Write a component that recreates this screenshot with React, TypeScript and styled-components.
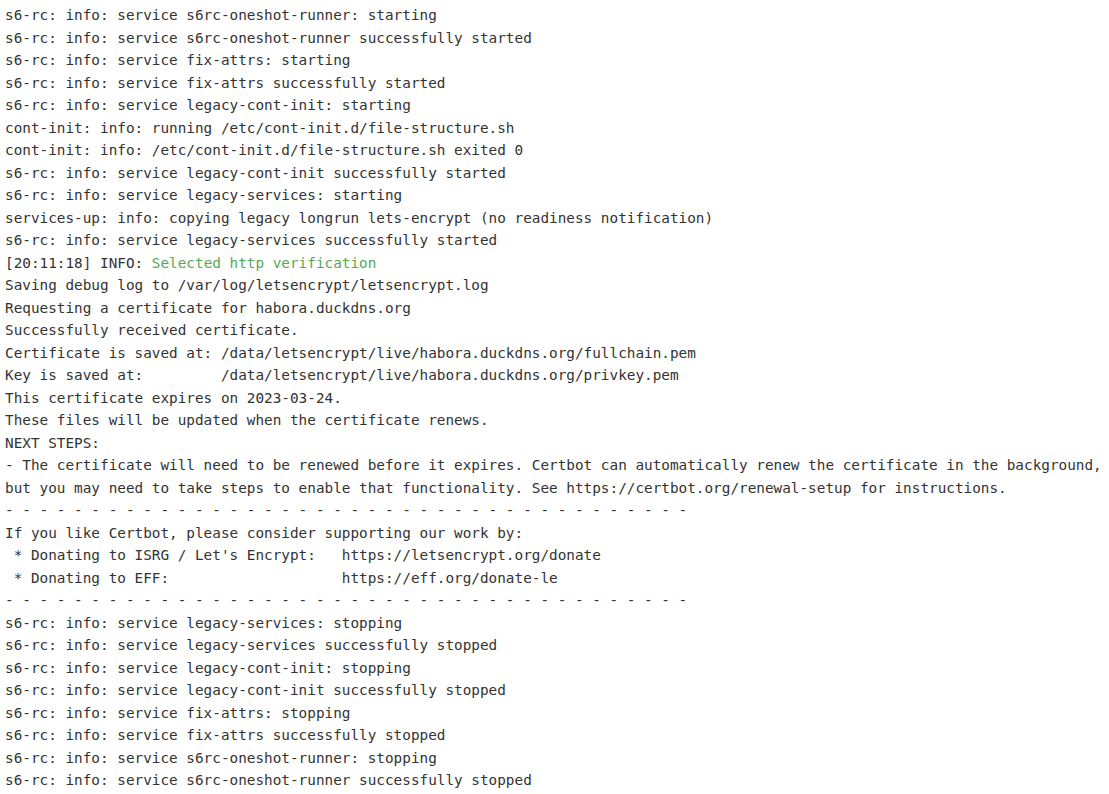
import React from "react";
import styled, { createGlobalStyle } from "styled-components";

const Global = createGlobalStyle`
  html, body { margin: 0; padding: 0; background: #ffffff; }
`;

const Log = styled.div`
  display: flex;
  flex-direction: column;
  padding: 4px 5px;
  font-family: "DejaVu Sans Mono", "Liberation Mono", monospace;
  font-size: 14.35px;
  line-height: 22.5px;
  color: #333333;
  background: #ffffff;
`;

const Line = styled.div`
  white-space: pre;
`;

const Tone = styled.span<{ $tone?: "green" }>`
  color: ${(p) => (p.$tone === "green" ? "#55a955" : "inherit")};
`;

const dashes = Array(40).fill("-").join(" ");

const lines: (string | React.ReactNode)[] = [
  "s6-rc: info: service s6rc-oneshot-runner: starting",
  "s6-rc: info: service s6rc-oneshot-runner successfully started",
  "s6-rc: info: service fix-attrs: starting",
  "s6-rc: info: service fix-attrs successfully started",
  "s6-rc: info: service legacy-cont-init: starting",
  "cont-init: info: running /etc/cont-init.d/file-structure.sh",
  "cont-init: info: /etc/cont-init.d/file-structure.sh exited 0",
  "s6-rc: info: service legacy-cont-init successfully started",
  "s6-rc: info: service legacy-services: starting",
  "services-up: info: copying legacy longrun lets-encrypt (no readiness notification)",
  "s6-rc: info: service legacy-services successfully started",
  <>
    [20:11:18] INFO: <Tone $tone="green">Selected http verification</Tone>
  </>,
  "Saving debug log to /var/log/letsencrypt/letsencrypt.log",
  "Requesting a certificate for habora.duckdns.org",
  "Successfully received certificate.",
  "Certificate is saved at: /data/letsencrypt/live/habora.duckdns.org/fullchain.pem",
  "Key is saved at:         /data/letsencrypt/live/habora.duckdns.org/privkey.pem",
  "This certificate expires on 2023-03-24.",
  "These files will be updated when the certificate renews.",
  "NEXT STEPS:",
  "- The certificate will need to be renewed before it expires. Certbot can automatically renew the certificate in the background,",
  "but you may need to take steps to enable that functionality. See https://certbot.org/renewal-setup for instructions.",
  dashes,
  "If you like Certbot, please consider supporting our work by:",
  " * Donating to ISRG / Let's Encrypt:   https://letsencrypt.org/donate",
  " * Donating to EFF:                    https://eff.org/donate-le",
  dashes,
  "s6-rc: info: service legacy-services: stopping",
  "s6-rc: info: service legacy-services successfully stopped",
  "s6-rc: info: service legacy-cont-init: stopping",
  "s6-rc: info: service legacy-cont-init successfully stopped",
  "s6-rc: info: service fix-attrs: stopping",
  "s6-rc: info: service fix-attrs successfully stopped",
  "s6-rc: info: service s6rc-oneshot-runner: stopping",
  "s6-rc: info: service s6rc-oneshot-runner successfully stopped",
];

export default function App() {
  return (
    <>
      <Global />
      <Log>
        {lines.map((l, i) => (
          <Line key={i}>{l}</Line>
        ))}
      </Log>
    </>
  );
}
